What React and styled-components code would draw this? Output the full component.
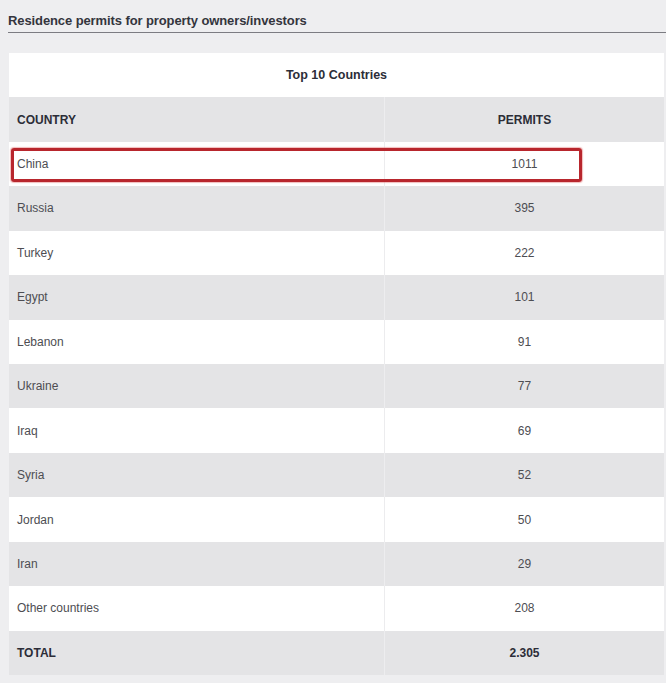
import React from "react";
import styled, { createGlobalStyle } from "styled-components";

const Global = createGlobalStyle`
  html, body { margin: 0; padding: 0; background: #eeeef0; }
  body { font-family: "Liberation Sans", Arial, sans-serif; }
`;

const Page = styled.div`
  width: 666px;
  height: 683px;
  overflow: hidden;
  background: #eeeef0;
`;

const Heading = styled.h2`
  margin: 0 0 0 8px;
  height: 33px;
  box-sizing: border-box;
  padding-top: 13px;
  font-size: 13px;
  line-height: 15px;
  font-weight: 700;
  color: #34353d;
  border-bottom: 1px solid #7c7c82;
  letter-spacing: -0.1px;
`;

const Table = styled.div`
  margin: 20px 2px 0 9px;
  display: grid;
  grid-template-columns: 375px 1fr;
`;

const Caption = styled.div`
  grid-column: 1 / 3;
  height: 44.4px;
  background: #ffffff;
  display: flex;
  align-items: center;
  justify-content: center;
  font-size: 12.5px;
  font-weight: 700;
  color: #2c2d38;
`;

const Cell = styled.div`
  height: 44.45px;
  box-sizing: border-box;
  display: flex;
  align-items: center;
  justify-content: ${(p) => (p.$num ? "center" : "flex-start")};
  padding-left: ${(p) => (p.$num ? "0" : "8px")};
  background: ${(p) => (p.$shade ? "#e4e4e6" : "#ffffff")};
  border-left: ${(p) =>
    p.$num ? (p.$shade ? "1px solid #ededef" : "1px solid #ececee") : "none"};
  font-size: 12px;
  font-weight: ${(p) => (p.$bold ? 700 : 400)};
  color: ${(p) => (p.$bold ? "#2c2d38" : "#4d4d52")};
`;

const HighlightRow = styled.div`
  grid-column: 1 / 3;
  position: relative;
  display: grid;
  grid-template-columns: 375px 1fr;
`;

const Marker = styled.div`
  position: absolute;
  left: 2px;
  top: 6px;
  width: 571px;
  height: 34px;
  box-sizing: border-box;
  border: 3px solid #b8262d;
  border-radius: 3px;
  box-shadow: 0 0 1px 1px rgba(230, 120, 120, 0.5);
  pointer-events: none;
`;

const rows = [
  ["Russia", "395"],
  ["Turkey", "222"],
  ["Egypt", "101"],
  ["Lebanon", "91"],
  ["Ukraine", "77"],
  ["Iraq", "69"],
  ["Syria", "52"],
  ["Jordan", "50"],
  ["Iran", "29"],
  ["Other countries", "208"],
];

export default function App() {
  return (
    <Page>
      <Global />
      <Heading>Residence permits for property owners/investors</Heading>
      <Table>
        <Caption>Top 10 Countries</Caption>
        <Cell $shade $bold>COUNTRY</Cell>
        <Cell $shade $bold $num>PERMITS</Cell>
        <HighlightRow>
          <Cell>China</Cell>
          <Cell $num>1011</Cell>
          <Marker />
        </HighlightRow>
        {rows.map(([c, n], i) => (
          <React.Fragment key={c}>
            <Cell $shade={i % 2 === 0}>{c}</Cell>
            <Cell $shade={i % 2 === 0} $num>{n}</Cell>
          </React.Fragment>
        ))}
        <Cell $shade $bold>TOTAL</Cell>
        <Cell $shade $bold $num>2.305</Cell>
      </Table>
    </Page>
  );
}
